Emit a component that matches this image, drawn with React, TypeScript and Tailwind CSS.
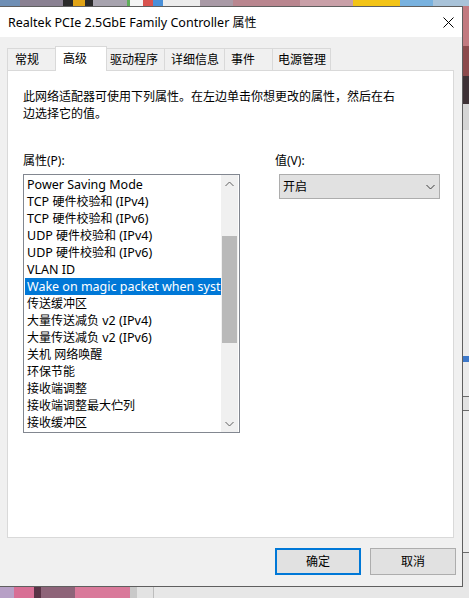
import React from "react";

const items = [
  "Power Saving Mode",
  "TCP 硬件校验和 (IPv4)",
  "TCP 硬件校验和 (IPv6)",
  "UDP 硬件校验和 (IPv4)",
  "UDP 硬件校验和 (IPv6)",
  "VLAN ID",
  "Wake on magic packet when system is in the S0ix power state",
  "传送缓冲区",
  "大量传送减负 v2 (IPv4)",
  "大量传送减负 v2 (IPv6)",
  "关机 网络唤醒",
  "环保节能",
  "接收端调整",
  "接收端调整最大伫列",
  "接收缓冲区",
];

const SELECTED = 6;

const CJK = /[\u3000-\u9fff\uff00-\uffef]+/;

// Latin runs get a touch bigger so they sit as wide as the UI font's Latin glyphs
function Txt({ s }: { s: string }) {
  const parts = s.split(/([\u3000-\u9fff\uff00-\uffef]+)/);
  return (
    <>
      {parts.map((p, i) =>
        p === "" ? null : CJK.test(p) ? (
          <React.Fragment key={i}>{p}</React.Fragment>
        ) : (
          <span key={i} className="text-[12.5px]">
            {p}
          </span>
        )
      )}
    </>
  );
}

function Chevron({ up = false, className = "" }: { up?: boolean; className?: string }) {
  return (
    <svg width="9" height="6" viewBox="0 0 9 6" className={className}>
      <path
        d={up ? "M0.5 5 L4.5 1 L8.5 5" : "M0.5 1 L4.5 5 L8.5 1"}
        fill="none"
        stroke="currentColor"
        strokeWidth="1"
      />
    </svg>
  );
}

function DesktopTop() {
  // bits of wallpaper/icons peeking over the window
  return (
    <div className="flex h-[6px] shrink-0">
      <div className="w-[20px] bg-[#6f8fb5]" />
      <div className="w-[43px] bg-[#8a8192]" />
      <div className="w-[10px] bg-[#2a2a2a]" />
      <div className="w-[12px] bg-[#e0a316]" />
      <div className="w-[8px] bg-[#2a2a2a]" />
      <div className="w-[34px] bg-[#a7a3ae]" />
      <div className="w-[3px] bg-[#5fae5a]" />
      <div className="w-[13px] bg-[#f4f4f4]" />
      <div className="w-[10px] bg-[#d9534f]" />
      <div className="w-[10px] bg-[#4a90d9]" />
      <div className="w-[37px] bg-[#ececec]" />
      <div className="w-[33px] bg-[#a99aa6]" />
      <div className="w-[67px] bg-[#b9868f]" />
      <div className="w-[53px] bg-[#c9a0a8]" />
      <div className="w-[47px] bg-[#f3c417]" />
      <div className="w-[33px] bg-[#79b2df]" />
      <div className="flex-1 bg-[#a9c3d9]" />
    </div>
  );
}

function DesktopRight() {
  return (
    <div className="flex w-[6px] flex-col">
      <div className="h-[40px] bg-[#c27a80]" />
      <div className="h-[30px] bg-[#8c4a4c]" />
      <div className="h-[28px] bg-[#3e3236]" />
      <div className="h-[26px] bg-[#d5d5d5]" />
      <div className="h-[226px] bg-[#ebebeb]" />
      <div className="h-[6px] bg-[#3d78c9]" />
      <div className="h-[34px] bg-[#ebebeb]" />
      <div className="h-px bg-[#6b6b6b]" />
      <div className="h-[13px] bg-[#e2e2e2]" />
      <div className="h-px bg-[#6b6b6b]" />
      <div className="h-[141px] bg-[#ececec]" />
      <div className="h-px bg-[#6b6b6b]" />
      <div className="flex-1 bg-[#e6e6e6]" />
    </div>
  );
}

function DesktopBottom() {
  return (
    <div className="flex h-[12px] shrink-0">
      <div className="w-[14px] bg-[#b7a0c6]" />
      <div className="w-[20px] bg-[#d86f95]" />
      <div className="w-[7px] bg-[#5a3447]" />
      <div className="w-[34px] bg-[#8e6479]" />
      <div className="w-[55px] bg-[#d9799a]" />
      <div className="w-[7px] bg-[#c9c9c9]" />
      <div className="w-[16px] bg-[#e3e3e3]" />
      <div className="w-px bg-[#bdbdbd]" />
      <div className="flex-1 bg-[#e7e7e7]" />
    </div>
  );
}

const tabs = [
  { label: "常规", w: "w-[49px]", pl: "pl-[7px]" },
  { label: "高级", w: "w-[52px]", pl: "pl-[7px]", active: true },
  { label: "驱动程序", w: "w-[59px]", pl: "pl-[3px]" },
  { label: "详细信息", w: "w-[61px]", pl: "pl-[6px]" },
  { label: "事件", w: "w-[49px]", pl: "pl-[6px]" },
  { label: "电源管理", w: "w-[59px]", pl: "pl-[5px]" },
];

function PropertyList() {
  return (
    <div className="mt-[5px] flex h-[259px] w-[217px] border border-[#828790] bg-white px-px">
      <div className="flex-1 overflow-hidden pt-px">
        {items.map((item, i) => (
          <div
            key={item}
            className={
              "h-[17px] overflow-hidden whitespace-nowrap pl-[2px] leading-[17px] " +
              (i === SELECTED ? "bg-[#0078d7] text-white" : "text-black")
            }
          >
            <Txt s={item} />
          </div>
        ))}
      </div>
      {/* scrollbar */}
      <div className="flex w-[17px] flex-col bg-[#f0f0f0]">
        <div className="flex h-[17px] items-center justify-center text-[#606060]">
          <Chevron up />
        </div>
        <div className="flex-1 px-px">
          <div className="mt-[44px] h-[107px] bg-[#b9b9b9]" />
        </div>
        <div className="flex h-[17px] items-center justify-center text-[#606060]">
          <Chevron />
        </div>
      </div>
    </div>
  );
}

export default function App() {
  return (
    <div className="flex h-[598px] w-[469px] flex-col overflow-hidden bg-[#e7e7e7] font-['Noto_Sans','Noto_Sans_CJK_SC',sans-serif] text-[12px] text-black">
      <DesktopTop />
      <div className="flex h-[581px] shrink-0">
        {/* window */}
        <div className="flex w-[463px] flex-col border-r border-t border-b border-[#5f5f5f] bg-[#f0f0f0]">
          <div className="flex h-[30px] shrink-0 items-center justify-between bg-white pl-[8px] pr-[8px]">
            <span className="leading-[17px]">
              <Txt s="Realtek PCIe 2.5GbE Family Controller 属性" />
            </span>
            <svg width="11" height="11" viewBox="0 0 11 11">
              <path d="M0.5 0.5 L10.5 10.5 M10.5 0.5 L0.5 10.5" stroke="#000" strokeWidth="1" />
            </svg>
          </div>

          <div className="flex flex-1 flex-col pt-[9px]">
            {/* tabs */}
            <div className="ml-[7px] flex h-[24px] items-end">
              {tabs.map((t, i) =>
                t.active ? (
                  <div
                    key={t.label}
                    className={`relative z-10 -mb-px flex h-[25px] items-center border-x border-t border-[#d9d9d9] bg-white ${t.w} ${t.pl} ${i > 0 ? "-ml-px" : ""}`}
                  >
                    {t.label}
                  </div>
                ) : (
                  <div
                    key={t.label}
                    className={`flex h-[22px] items-center border-x border-t border-[#d9d9d9] bg-[#f0f0f0] ${t.w} ${t.pl} ${i > 0 ? "-ml-px" : ""}`}
                  >
                    {t.label}
                  </div>
                )
              )}
            </div>

            {/* panel */}
            <div className="ml-[7px] flex h-[468px] w-[447px] flex-col border border-[#d9d9d9] bg-white pl-[15px] pt-[17px]">
              <p className="leading-[17px]">
                此网络适配器可使用下列属性。在左边单击你想更改的属性，然后在右
                <br />
                边选择它的值。
              </p>
              <div className="mt-[30px] flex">
                <div className="flex flex-col">
                  <span className="leading-[17px]">属性(P):</span>
                  <PropertyList />
                </div>
                <div className="ml-[35px] flex flex-col">
                  <span className="leading-[17px]">值(V):</span>
                  <div className="ml-[4px] mt-[5px] flex h-[25px] w-[161px] items-center justify-between border border-[#adadad] bg-[#e1e1e1] pl-[3px] pr-[4px]">
                    <span>开启</span>
                    <Chevron className="text-[#3c3c3c]" />
                  </div>
                </div>
              </div>
            </div>

            {/* buttons */}
            <div className="mt-[10px] flex justify-end gap-[9px] pr-[6px]">
              <button className="h-[27px] w-[86px] border-2 border-[#0078d7] bg-[#e1e1e1]">确定</button>
              <button className="h-[27px] w-[86px] border border-[#adadad] bg-[#e1e1e1]">取消</button>
            </div>
          </div>
        </div>
        <DesktopRight />
      </div>
      <DesktopBottom />
    </div>
  );
}
